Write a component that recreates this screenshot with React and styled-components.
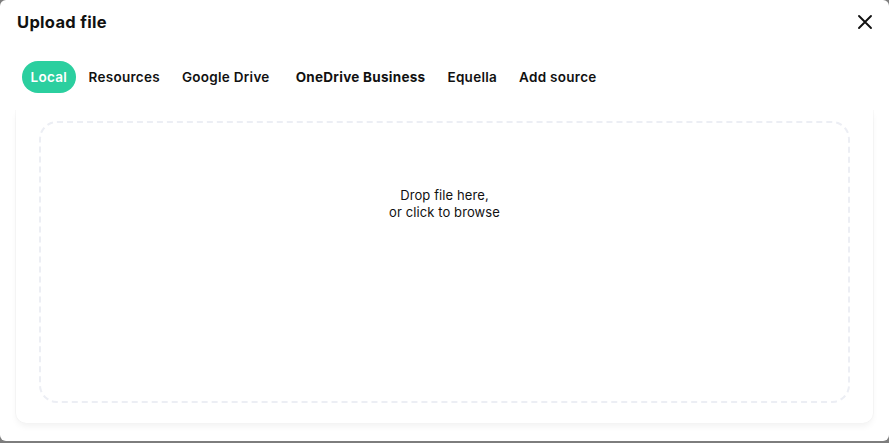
import React, { useState } from "react";
import styled, { createGlobalStyle } from "styled-components";

const Global = createGlobalStyle`
  html, body {
    margin: 0;
    padding: 0;
    background: #7d7d7d;
  }
  body {
    font-family: "Inter", "Noto Sans", sans-serif;
    color: #111;
  }
`;

const Modal = styled.div`
  width: 100%;
  height: 441px;
  background: #fff;
  border-radius: 6px;
  display: flex;
  flex-direction: column;
  box-sizing: border-box;
  overflow: hidden;
`;

const Header = styled.div`
  height: 44px;
  padding: 0 17px;
  display: flex;
  align-items: center;
  justify-content: space-between;
  flex-shrink: 0;
`;

const Title = styled.h1`
  margin: 0;
  font-size: 16.5px;
  font-weight: 700;
  letter-spacing: 0.3px;
`;

const CloseButton = styled.button`
  border: 0;
  background: none;
  padding: 0;
  width: 22px;
  height: 22px;
  display: flex;
  align-items: center;
  justify-content: center;
  margin-right: -4px;
  cursor: pointer;
`;

const Tabs = styled.div`
  margin-top: 17px;
  padding: 0 22px;
  display: flex;
  align-items: center;
  gap: 4px;
  flex-shrink: 0;
`;

const Tab = styled.button`
  height: 32px;
  padding: 0 ${({ $active }) => ($active ? "8.5px" : "9px")};
  border: 0;
  border-radius: 16px;
  font-family: inherit;
  font-size: 13.5px;
  letter-spacing: 0.28px;
  font-weight: ${({ $bold }) => ($bold ? 700 : 600)};
  background: ${({ $active }) => ($active ? "#2bcf9f" : "transparent")};
  color: ${({ $active }) => ($active ? "#fff" : "#111")};
  margin-right: ${({ $extra }) => ($extra ? "4px" : "0")};
  cursor: pointer;
  white-space: nowrap;
`;

const Body = styled.div`
  flex: 1;
  padding: 17px 16px 18px;
  display: flex;
  min-height: 0;
`;

const Card = styled.div`
  flex: 1;
  padding: 11px 23px 20px;
  border-radius: 0 0 10px 10px;
  box-shadow: 0 4px 7px -1px rgba(0, 0, 0, 0.06), 1px 0 0 rgba(0, 0, 0, 0.025),
    -1px 0 0 rgba(0, 0, 0, 0.025);
  display: flex;
  background: #fff;
`;

const DropZone = styled.div`
  flex: 1;
  border: 2px dashed #eceef4;
  border-radius: 18px;
  padding-top: 64px;
  text-align: center;
  font-size: 13px;
  line-height: 17px;
  letter-spacing: 0.1px;
  color: #111;
  cursor: pointer;
`;

const tabs = [
  { label: "Local" },
  { label: "Resources" },
  { label: "Google Drive", extra: true },
  { label: "OneDrive Business", bold: true },
  { label: "Equella" },
  { label: "Add source" },
];

export default function App() {
  const [active, setActive] = useState(0);

  return (
    <>
      <Global />
      <Modal>
        <Header>
          <Title>Upload file</Title>
          <CloseButton aria-label="Close">
            <svg width="16" height="16" viewBox="0 0 16 16">
              <path
                d="M2 2 L14 14 M14 2 L2 14"
                stroke="#111"
                strokeWidth="1.9"
                strokeLinecap="round"
              />
            </svg>
          </CloseButton>
        </Header>
        <Tabs>
          {tabs.map((t, i) => (
            <Tab
              key={t.label}
              $active={i === active}
              $bold={t.bold}
              $extra={t.extra}
              onClick={() => setActive(i)}
            >
              {t.label}
            </Tab>
          ))}
        </Tabs>
        <Body>
          <Card>
            <DropZone>
              Drop file here,
              <br />
              or click to browse
            </DropZone>
          </Card>
        </Body>
      </Modal>
    </>
  );
}
